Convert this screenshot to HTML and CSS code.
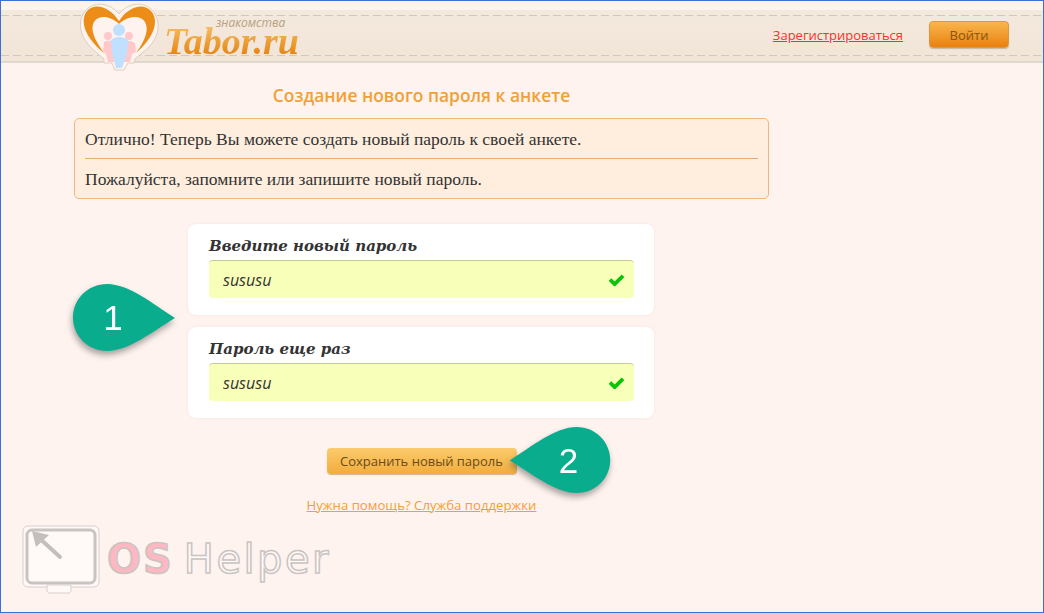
FILE: index.html
```html
<!DOCTYPE html>
<html lang="ru">
<head>
    <meta charset="UTF-8">
    <title>Создание нового пароля</title>
    <link rel="stylesheet" href="styles.css">
</head>
<body>
<div class="window">
    <header class="topbar">
        <svg class="heart" width="90" height="72" viewBox="75 2 90 72">
            <path class="heart-halo" d="M119 14C110 3 96 1 87 9C75 21 80 40 97 53L104 59L104 63H112L115 70H124L128 63H134L135 59L142 53C160 40 163 21 151 9C142 1 128 3 119 14Z"/>
            <path class="heart-orange" d="M119 21C111 8 96 2 88 10C79 19 84 37 104 53C94 39 90 29 94 22C98 15 110 15 119 24Z"/>
            <path class="heart-orange" d="M119 21C127 8 142 2 150 10C160 19 155 37 136 53C146 39 149 29 145 22C141 15 128 15 119 24Z"/>
            <circle class="person-pink" cx="108" cy="36" r="4"/>
            <circle class="person-pink" cx="129" cy="36" r="4"/>
            <path class="person-pink" d="M104 42C108 40 111 41 113 42L114 62H108L106 54L103 52Z"/>
            <path class="person-pink" d="M124 42C128 40 132 41 135 43L136 52L132 54L130 62H124Z"/>
            <circle class="person-blue" cx="119" cy="30" r="6"/>
            <path class="person-blue" d="M111 40C114 36 124 36 128 40L127 53L122 68H116L112 53Z"/>
        </svg>
        <div class="brand">
            <span class="brand-sub">знакомства</span>
            <span class="brand-name">Tabor.ru</span>
        </div>
        <a class="register" href="#">Зарегистрироваться</a>
        <button class="login">Войти</button>
    </header>

    <main class="content">
        <h1 class="title">Создание нового пароля к анкете</h1>
        <div class="notice">
            <p>Отлично! Теперь Вы можете создать новый пароль к своей анкете.</p>
            <hr>
            <p>Пожалуйста, запомните или запишите новый пароль.</p>
        </div>

        <div class="callout-wrap">
            <div class="callout callout-left">
                <svg width="102" height="67" viewBox="0 0 102 67"><path d="M34 0C56 0 80 20 102 34C80 47 56 67 34 67C15 67 0 52 0 33.5C0 15 15 0 34 0Z"/></svg>
                <span>1</span>
            </div>
            <div class="card">
                <label>Введите новый пароль</label>
                <div class="field">
                    <input type="text" value="sususu" readonly>
                    <svg class="check" width="15" height="13" viewBox="0 0 16 14"><path d="M1 7L6 12L15 3" /></svg>
                </div>
            </div>
            <div class="card">
                <label>Пароль еще раз</label>
                <div class="field">
                    <input type="text" value="sususu" readonly>
                    <svg class="check" width="15" height="13" viewBox="0 0 16 14"><path d="M1 7L6 12L15 3" /></svg>
                </div>
            </div>
        </div>

        <div class="save-row">
            <button class="save">Сохранить новый пароль</button>
            <div class="callout callout-right">
                <svg width="102" height="66" viewBox="0 0 102 67"><path d="M68 0C46 0 22 20 0 34C22 47 46 67 68 67C87 67 102 52 102 33.5C102 15 87 0 68 0Z"/></svg>
                <span>2</span>
            </div>
        </div>
        <a class="help" href="#">Нужна помощь? Служба поддержки</a>
    </main>

    <div class="watermark">
        <svg width="80" height="70" viewBox="0 0 80 70">
            <rect x="1" y="1" width="76" height="61" rx="5" fill="#fff8f6" stroke="#d5d0ce"/>
            <rect x="5" y="5" width="68" height="53" rx="5" fill="#fffaf8" stroke="#c9c4c2" stroke-width="3"/>
            <path d="M25 49H49V54C49 56 48 57 46 57H28C26 57 25 56 25 54Z" transform="translate(0 11)" fill="#fff8f6" stroke="#d5d0ce"/>
            <path d="M38 32L15 11" stroke="#c4bfbd" stroke-width="4" stroke-linecap="round"/>
            <path d="M10 6L27 10L14 22Z" fill="#c4bfbd"/>
        </svg>
        <span class="wm-os">OS</span>
        <span class="wm-helper">Helper</span>
    </div>
</div>
</body>
</html>
```

FILE: styles.css
```css
html, body {
    margin: 0;
    padding: 0;
}

body {
    background-color: #fff3ef;
    font-family: "Open Sans", sans-serif;
    color: #333;
}

.window {
    position: relative;
    box-sizing: border-box;
    height: 613px;
    overflow: hidden;
    border: 1px solid #3a70d6;
    padding-top: 9px;
}

.topbar {
    position: relative;
    box-sizing: border-box;
    display: flex;
    align-items: center;
    justify-content: flex-end;
    height: 53px;
    padding: 0 34px 2px 0;
    background: linear-gradient(#f4e9dd, #f1e5d8);
    border-bottom: 2px solid #e0d8cf;
}

.topbar::before,
.topbar::after {
    content: "";
    position: absolute;
    left: 0;
    right: 0;
    height: 1px;
    background: repeating-linear-gradient(90deg, #d3c9ba 0 8px, transparent 8px 12px);
}

.topbar::before {
    top: 5px;
}

.topbar::after {
    bottom: 5px;
}

.heart {
    position: absolute;
    left: 74px;
    top: -8px;
    z-index: 1;
}

.heart-halo {
    fill: #fff3ef;
    stroke: #dccfbf;
}

.heart-orange {
    fill: #ec8d17;
}

.person-pink {
    fill: #ffc9cc;
}

.person-blue {
    fill: #bfe0ff;
}

.brand {
    position: absolute;
    left: 164px;
    top: 5px;
    z-index: 1;
    width: 136px;
    height: 44px;
}

.brand-sub {
    position: absolute;
    left: 51px;
    top: 0;
    font: italic 12px/16px "Open Sans", sans-serif;
    color: #b8a081;
}

.brand-name {
    position: absolute;
    left: -1px;
    top: 11px;
    font: italic bold 38px/30px "Liberation Serif", serif;
    background: linear-gradient(#f5bd62, #e6820f);
    -webkit-background-clip: text;
    background-clip: text;
    color: transparent;
}

.register {
    margin-right: 26px;
    font-size: 13px;
    color: #f5332b;
}

.login {
    width: 80px;
    height: 27px;
    padding: 0;
    border: 1px solid #dd9a3a;
    border-radius: 4px;
    background: linear-gradient(#f8b64e, #ea8110);
    box-shadow: 0 1px 1px #c9b79f;
    font: 13px "Open Sans", sans-serif;
    color: #86560f;
}

.content {
    display: flex;
    flex-direction: column;
    align-items: center;
    width: 695px;
    margin-left: 73px;
}

.title {
    margin: 20px 0 11px;
    font-size: 17.4px;
    line-height: 24px;
    font-weight: 600;
    color: #f0a136;
}

.notice {
    box-sizing: border-box;
    width: 100%;
    height: 81px;
    padding: 0 10px;
    background-color: #ffeedd;
    border: 1px solid #ecb87f;
    border-radius: 5px;
    font: 17.5px/24px "Liberation Serif", serif;
    color: #333;
}

.notice p {
    margin: 0;
    padding-top: 8px;
}

.notice hr {
    margin: 7px 0 0;
    border: 0;
    border-top: 1px solid #e6ab72;
}

.callout-wrap {
    position: relative;
    display: flex;
    flex-direction: column;
    gap: 12px;
    margin: 25px 1px 0 0;
}

.card {
    box-sizing: border-box;
    width: 466px;
    height: 91px;
    padding: 11px 20px 0 21px;
    background-color: #fff;
    border-radius: 8px;
    box-shadow: 0 0 3px #f3e3dc;
}

.card label {
    display: block;
    font: italic bold 15px/22px "DejaVu Serif", serif;
    color: #333;
}

.field {
    position: relative;
    margin-top: 3px;
}

.field input {
    display: block;
    box-sizing: border-box;
    width: 425px;
    height: 38px;
    padding: 0 14px;
    background-color: #f8ffb9;
    border: 0;
    border-top: 1px solid #c7cb92;
    border-radius: 4px;
    font: italic 16px "Open Sans", sans-serif;
    color: #333;
    outline: none;
}

.check {
    position: absolute;
    right: 10px;
    top: 13px;
}

.check path {
    fill: none;
    stroke: #0ac40a;
    stroke-width: 4;
}

.callout {
    position: absolute;
    width: 102px;
    height: 67px;
    filter: drop-shadow(-1px 4px 3px rgba(60, 60, 60, .45));
}

.callout svg {
    display: block;
    fill: #09ad8d;
}

.callout span {
    position: absolute;
    top: 0;
    width: 34px;
    font: 35px/67px "Liberation Sans", sans-serif;
    text-align: center;
    color: #fff;
}

.callout-left {
    left: -115px;
    top: 60px;
}

.callout-left span {
    left: 23px;
}

.callout-right {
    left: 182px;
    top: -21px;
}

.callout-right span {
    left: 43px;
}

.save-row {
    position: relative;
    margin-top: 30px;
}

.save {
    display: block;
    width: 190px;
    height: 26px;
    padding: 0;
    border: 0;
    border-radius: 4px;
    background: linear-gradient(#fbcb6c, #f2ad3d);
    box-shadow: 0 1px 1px #cdb79a;
    font: 13px "Open Sans", sans-serif;
    color: #6b4a16;
}

.help {
    margin-top: 22px;
    font-size: 13.2px;
    color: #f0a136;
}

.watermark {
    position: absolute;
    left: 21px;
    top: 524px;
    display: flex;
    align-items: flex-start;
}

.wm-os,
.wm-helper {
    font: bold 40px/40px "DejaVu Sans", sans-serif;
    -webkit-text-stroke: 1.5px #c9c4c2;
}

.wm-os {
    margin: 14px 0 0 5px;
    letter-spacing: 2px;
    color: #fdb8c3;
}

.wm-helper {
    margin: 14px 0 0 10px;
    font-weight: normal;
    letter-spacing: 2.5px;
    color: #fff8f6;
}
```
